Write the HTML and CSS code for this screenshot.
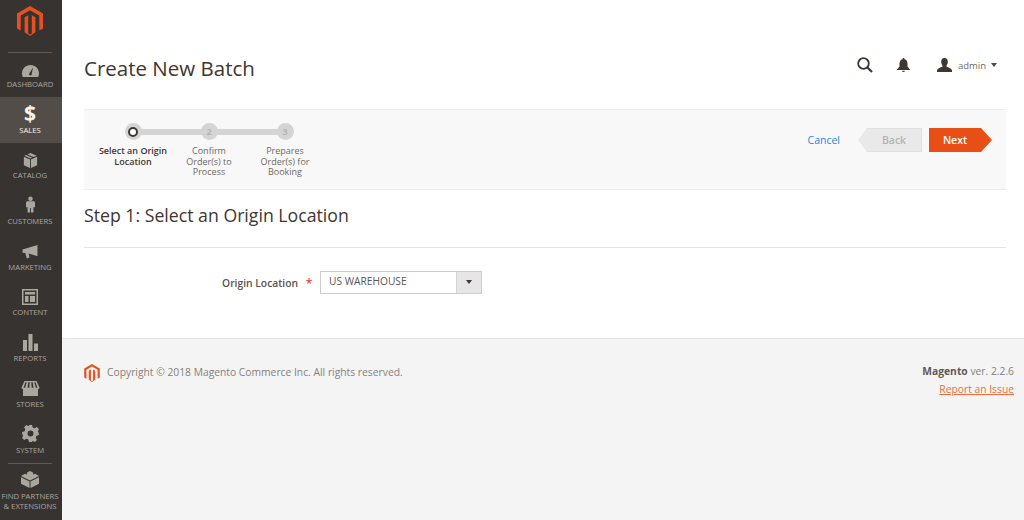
FILE: index.html
```html
<!DOCTYPE html>
<html lang="en">
<head>
<meta charset="utf-8">
<title>Create New Batch</title>
<link rel="stylesheet" href="styles.css">
</head>
<body>
<div class="app">
  <nav class="side">
    <div class="logo">
      <svg width="26" height="30" viewBox="0 0 26 30"><path class="orange" d="M13 0 26 7.500V22.500L22.300 24.600V9.600L13 4.300 3.700 9.600V24.600L0 22.500V7.500ZM11.200 9.200V27.400L13 28.500 14.800 27.400V9.200L18.400 11.300V26.300L13 30 7.600 26.300V11.300Z"/></svg>
    </div>
    <ul class="menu">
      <li class="item"><svg class="ico" width="17" height="12" viewBox="0 0 17 12"><path d="M8.500 0C3.500 0 0 4 0 8.500 0 9.800 0.300 11 0.800 12H16.200C16.700 11 17 9.800 17 8.500 17 4 13.500 0 8.500 0ZM7.300 8.400 11 2.500 9.700 9.200A1.300 1.300 0 1 1 7.300 8.400Z"/></svg><span>DASHBOARD</span></li>
      <li class="item active"><span class="dollar">$</span><span>SALES</span></li>
      <li class="item"><svg class="ico" width="15" height="15" viewBox="0 0 16 17"><path d="M8 0 15 3 11.500 4.600 4.500 1.600ZM3 2.300 10 5.300 8 6.200 1 3ZM0.500 4.200 7.500 7.400V17L0.500 13.800ZM15.500 4.200V13.800L8.500 17V7.400Z"/></svg><span>CATALOG</span></li>
      <li class="item"><svg class="ico" width="9" height="19" viewBox="0 0 10 18"><path d="M5 0A2.500 2.500 0 1 1 5 5 2.500 2.500 0 1 1 5 0ZM1.500 5.500H8.500Q10 5.500 10 7V12H8.300V18H5.500V13H4.500V18H1.700V12H0V7Q0 5.500 1.500 5.500Z"/></svg><span>CUSTOMERS</span></li>
      <li class="item"><svg class="ico" width="16" height="14" viewBox="0 0 17 15"><path d="M16.500 0V12L7 9 8 13.500 5 14.500 3.500 8.600 0.500 8.300V4.800Z"/></svg><span>MARKETING</span></li>
      <li class="item"><svg class="ico" width="16" height="16" viewBox="0 0 16 16"><path fill-rule="evenodd" d="M0 0H16V16H0ZM1.500 1.500V14.500H14.500V1.500ZM3 3H13V5.500H3ZM3 7H6.500V13H3ZM8 7H13V13H8Z"/></svg><span>CONTENT</span></li>
      <li class="item"><svg class="ico" width="15" height="17" viewBox="0 0 15 17"><path d="M0 6H4V17H0ZM5.500 0H9.500V17H5.500ZM11 9.500H15V17H11Z"/></svg><span>REPORTS</span></li>
      <li class="item"><svg class="ico" width="19" height="15" viewBox="0 0 18 15"><path fill-rule="evenodd" d="M3 0H15L18 6.500Q18 8 16.500 8V15H1.500V8Q0 8 0 6.500ZM4 1.200 2 6.800H3.600L5.200 1.200ZM6.800 1.200 6 6.800H7.800L8.200 1.200ZM9.800 1.200 10.200 6.800H12L11.200 1.200ZM12.800 1.200 14.400 6.800H16L14 1.200Z"/></svg><span>STORES</span></li>
      <li class="item"><svg class="ico" width="17" height="17" viewBox="0 0 16 16"><path fill-rule="evenodd" d="M6.500 0H9.500L10 2.300 11.900 3.100 14 1.900 16 4 14.800 6 15.600 6.800 16 9.500 13.700 10 12.900 11.900 14.100 14 12 16 10 14.800 9.500 16H6.500L6 13.700 4.100 12.900 2 14.100 0 12 1.200 10 0.400 9.200 0 6.500 2.300 6 3.100 4.100 1.900 2 4 0 6 1.200ZM8 5.200A2.800 2.800 0 1 0 8 10.800 2.800 2.800 0 1 0 8 5.200Z"/></svg><span>SYSTEM</span></li>
    </ul>
    <div class="partners">
      <svg class="ico" width="18" height="17" viewBox="0 0 18 17"><path d="M9 0 12 1.500V3.500L14 2.800 18 5 9 9.500 0 5 4 2.800 6 3.500V1.500ZM0 6.200 8.500 10.500V17L0 12.800ZM18 6.200V12.800L9.500 17V10.500Z"/></svg>
      <span>FIND PARTNERS<br>&amp; EXTENSIONS</span>
    </div>
  </nav>
  <div class="main">
    <div class="page">
      <header class="top">
        <h1 class="title">Create New Batch</h1>
        <div class="actions">
          <svg class="search" width="16" height="16" viewBox="0 0 16 16"><circle cx="6.500" cy="6.500" r="5.300" fill="none" stroke="#41362f" stroke-width="1.800"/><path d="M10.500 10.500 15 15" stroke="#41362f" stroke-width="2.200" fill="none"/></svg>
          <svg class="bell" width="13" height="14" viewBox="0 0 13 14"><path fill="#41362f" d="M6.500 0Q7.500 0 7.600 1.200 10.500 2 10.500 6V8.500L13 11.500V12H0V11.500L2.500 8.500V6Q2.500 2 5.400 1.200 5.500 0 6.500 0ZM5 12.700H8Q7.800 14 6.500 14 5.200 14 5 12.700Z"/></svg>
          <div class="user">
            <svg width="15" height="14" viewBox="0 0 15 14"><path fill="#41362f" d="M7.500 0C9.800 0 10.800 1.500 10.800 3.800 10.800 5.800 10 7.300 9.300 8 9.300 9.300 15 10 15 12.500V14H0V12.500C0 10 5.700 9.300 5.700 8 5 7.300 4.200 5.800 4.200 3.800 4.200 1.500 5.200 0 7.500 0Z"/></svg>
            <span class="uname">admin</span>
            <span class="caret"></span>
          </div>
        </div>
      </header>
      <section class="wizard">
        <ol class="steps">
          <li class="step current"><span class="dot"><span class="ring"></span></span><span class="label">Select an Origin<br>Location</span></li>
          <li class="step"><span class="dot">2</span><span class="label">Confirm<br>Order(s) to<br>Process</span></li>
          <li class="step"><span class="dot">3</span><span class="label">Prepares<br>Order(s) for<br>Booking</span></li>
        </ol>
        <div class="wiz-actions">
          <a class="cancel">Cancel</a>
          <span class="btn back">Back</span>
          <span class="btn next">Next</span>
        </div>
      </section>
      <h2 class="step-title">Step 1: Select an Origin Location</h2>
      <div class="form-row">
        <label class="field-label">Origin Location</label>
        <span class="req">*</span>
        <div class="select"><span class="val">US WAREHOUSE</span><span class="arrow"><span class="caret dark"></span></span></div>
      </div>
    </div>
    <footer class="foot">
      <div class="copy">
        <svg width="16" height="18" viewBox="0 0 26 30"><path class="orange" d="M13 0 26 7.500V22.500L22.300 24.600V9.600L13 4.300 3.700 9.600V24.600L0 22.500V7.500ZM11.200 9.200V27.400L13 28.500 14.800 27.400V9.200L18.400 11.300V26.300L13 30 7.600 26.300V11.300Z"/></svg>
        <span>Copyright © 2018 Magento Commerce Inc. All rights reserved.</span>
      </div>
      <div class="ver">
        <div><b>Magento</b> ver. 2.2.6</div>
        <a class="report">Report an Issue</a>
      </div>
    </footer>
  </div>
</div>
</body>
</html>
```
FILE: styles.css
```css
* { box-sizing: border-box; }
html, body { margin: 0; height: 100%; }
body { font-family: "Open Sans", "Liberation Sans", sans-serif; background: #fff; color: #41362f; overflow: hidden; }
.app { display: flex; height: 520px; }
.orange { fill: #e8501f; }

.side { width: 62px; flex: none; background: #373330; color: #aaa6a0; display: flex; flex-direction: column; }
.logo { height: 53px; margin: 0 10px 0 8px; border-bottom: 1px solid #5f5a56; display: flex; justify-content: center; padding-top: 6px; }
.menu { list-style: none; margin: 0; padding: 0; }
.item { height: 45.7px; display: flex; flex-direction: column; align-items: center; justify-content: flex-end; padding: 0 2px 7px 0; font-size: 7.700px; line-height: 11px; }
.item .ico { margin-bottom: 2.500px; }
.ico { fill: #aaa6a0; }
.item:first-child { height: 44px; }
.active { background: #524d49; color: #f7f3eb; }
.dollar { font-size: 21px; line-height: 22px; font-weight: 700; color: #f7f3eb; margin-bottom: 1px; }
.partners { margin: 0 10px 0 8px; padding-top: 7px; border-top: 1px solid #5f5a56; display: flex; flex-direction: column; align-items: center; text-align: center; font-size: 7.700px; line-height: 10px; white-space: nowrap; }
.partners .ico { margin-bottom: 3px; }

.main { flex: 1; min-width: 0; display: flex; flex-direction: column; }
.page { height: 338px; padding: 0 18px 0 22px; flex: none; }
.top { height: 109px; display: flex; justify-content: space-between; padding-top: 54px; }
.title { margin: 0; font-size: 20.500px; line-height: 28px; font-weight: 400; color: #41362f; }
.actions { display: flex; align-items: center; height: 22px; margin-right: 9px; }
.search { margin-right: 24px; }
.bell { margin-right: 27px; }
.user { display: flex; align-items: center; }
.uname { font-size: 9.500px; color: #706a65; margin-left: 6px; }
.caret { display: inline-block; width: 0; height: 0; border-left: 3.500px solid transparent; border-right: 3.500px solid transparent; border-top: 4px solid #514943; margin-left: 5px; }

.wizard { height: 81px; background: #f8f8f8; border-top: 1px solid #eee; border-bottom: 1px solid #eee; display: flex; justify-content: space-between; }
.steps { list-style: none; margin: 0; padding: 14px 0 0 11px; display: flex; }
.step { width: 76px; display: flex; flex-direction: column; align-items: center; text-align: center; font-size: 9px; line-height: 10.500px; color: #6d6863; position: relative; }
.step::before { content: ""; position: absolute; left: 50%; top: 5px; width: 76px; height: 6px; background: #d4d4d4; }
.step:last-child::before { display: none; }
.dot { width: 17px; height: 17px; margin-top: -1px; border-radius: 50%; background: #d4d4d4; color: #b5b5b5; font-size: 9px; font-weight: 700; line-height: 17px; display: flex; align-items: center; justify-content: center; position: relative; margin-bottom: 6px; }
.ring { width: 10px; height: 10px; border-radius: 50%; background: #fff; border: 2.500px solid #41362f; }
.label { white-space: nowrap; }
.current { color: #41362f; font-weight: 600; }
.wiz-actions { display: flex; align-items: center; padding-right: 15px; height: 60px; font-size: 10.500px; }
.cancel { color: #2a84de; margin-right: 19px; font-weight: 500; }
.btn { height: 24px; line-height: 24px; text-align: center; position: relative; font-weight: 600; }
.back { width: 55px; margin-left: 8px; margin-right: 7px; background: #e9e9e9; color: #b4b4b4; border: 1px solid #e0e0e0; border-left: 0; line-height: 22px; }
.back::before { content: ""; position: absolute; left: -9px; top: -1px; border-top: 12px solid transparent; border-bottom: 12px solid transparent; border-right: 9px solid #e9e9e9; }
.next { width: 52px; margin-right: 10px; background: #e84f17; color: #fff; }
.next::after { content: ""; position: absolute; right: -11px; top: 0; border-top: 12px solid transparent; border-bottom: 12px solid transparent; border-left: 11px solid #e84f17; }

.step-title { margin: 0; padding: 13px 0 0; height: 58px; border-bottom: 1px solid #e3e3e3; font-size: 17.700px; line-height: 24px; font-weight: 400; color: #41362f; }
.form-row { display: flex; align-items: center; margin-top: 23px; height: 22px; }
.field-label { width: 214px; padding-top: 2px; text-align: right; font-size: 10.300px; font-weight: 600; color: #5a524c; }
.req { width: 22px; padding-top: 2px; text-align: center; color: #e22626; font-size: 12px; }
.select { width: 162px; height: 23px; border: 1px solid #ccc; background: #fff; display: flex; justify-content: space-between; }
.val { font-size: 10.200px; line-height: 19px; color: #5c5651; padding-left: 8px; }
.arrow { width: 25px; background: #e6e6e6; border-left: 1px solid #d4d4d4; display: flex; align-items: center; justify-content: center; }
.caret.dark { margin: 0; border-top-color: #41362f; }

.foot { flex: 1; background: #f4f4f4; border-top: 1px solid #e3e3e3; display: flex; justify-content: space-between; padding: 25px 10px 0 22px; font-size: 10.300px; color: #857f7a; }
.copy { display: flex; align-items: flex-start; gap: 7px; line-height: 16px; }
.ver { text-align: right; line-height: 17.500px; margin-top: -1px; }
.ver b { color: #5f5a56; font-weight: 700; }
.report { color: #f26d3d; text-decoration: underline; }
```
